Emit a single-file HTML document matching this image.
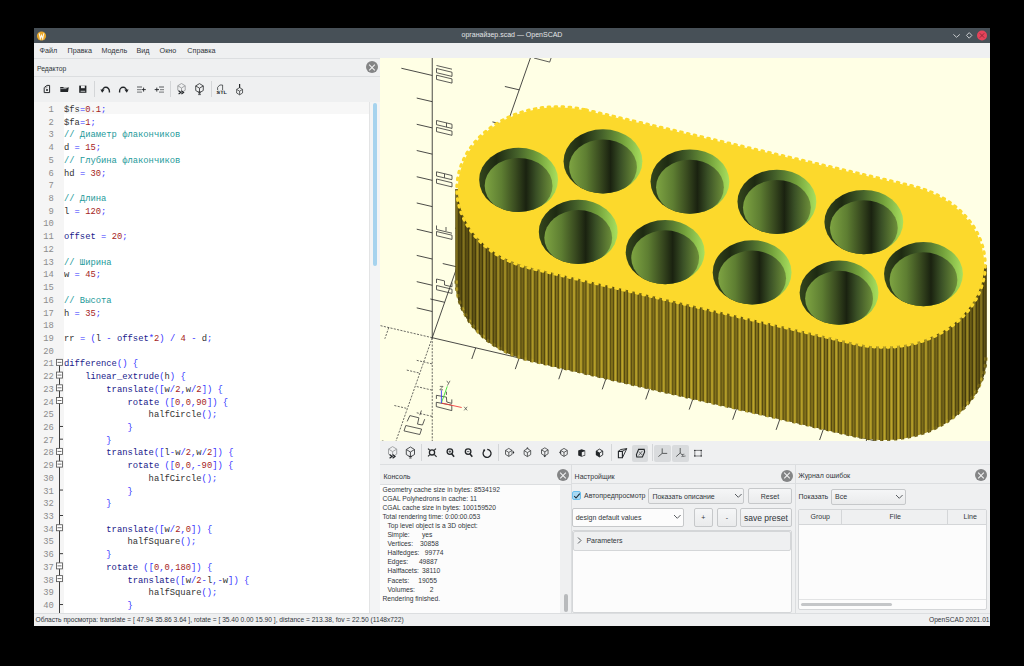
<!DOCTYPE html>
<html><head><meta charset="utf-8">
<style>
*{margin:0;padding:0;box-sizing:border-box}
html,body{width:1024px;height:666px;background:#000;overflow:hidden;font-family:"Liberation Sans",sans-serif;color:#31363b}
.a{position:absolute}
#win{position:absolute;left:34px;top:28px;width:956px;height:598px;background:#eff0f1;overflow:hidden}
#title{left:34px;top:28px;width:956px;height:14.5px;background:#475057}
#title .t{position:absolute;left:0;width:956px;top:2.5px;text-align:center;font-size:7px;color:#e3e5e7}
#menu{left:34px;top:42.5px;width:956px;height:16.5px;background:#eff0f1;border-bottom:1px solid #dcdee0}
#menu span{position:absolute;top:3.3px;font-size:7.2px;color:#31363b}
.hdr{background:#eff0f1;border-bottom:1px solid #dcdee0}
.hdr .t{position:absolute;left:3px;font-size:7px;color:#31363b}
.xbtn{position:absolute;width:12px;height:12px;border-radius:50%;background:#848586}
.xbtn:before,.xbtn:after{content:"";position:absolute;left:2px;top:5.55px;width:8px;height:0.9px;background:#f4f4f4;transform:rotate(45deg)}
.xbtn:after{transform:rotate(-45deg)}
#gutter{left:34px;top:101.5px;width:29.5px;height:511.5px;background:#f5f5f5}
#code{left:63.5px;top:101.5px;width:305px;height:511.5px;background:#fff}
#curline{left:63.5px;top:101.5px;width:305px;height:12.8px;background:#f7f7f7}
.ln{position:absolute;left:24px;width:29.8px;text-align:right;font-family:"Liberation Mono",monospace;font-size:9.4px;line-height:12.72px;height:12.72px;color:#8c8c8c;transform:scaleX(0.94);transform-origin:100% 0}
.cl{position:absolute;left:63.8px;white-space:pre;font-family:"Liberation Mono",monospace;font-size:9.4px;line-height:12.72px;height:12.72px;color:#333;transform:scaleX(0.94);transform-origin:0 0}
.c{color:#1d9a9a}.k{color:#20208a}.o{color:#3333ff}.n{color:#a51d1d}
.vp{position:absolute;left:380px;top:58px}
.tb{background:#eff0f1}
.sep{position:absolute;width:1px;background:#d4d6d8}
.ic{position:absolute}
#console{left:380px;top:484.8px;width:180px;height:128.2px;background:#fcfcfc}
.cons{position:absolute;left:382.5px;font-size:6.7px;color:#31363b;white-space:pre;line-height:9px}
.btn{position:absolute;background:linear-gradient(#f5f6f7,#eaebec);border:1px solid #c6c8ca;border-radius:2px;font-size:7px;text-align:center;color:#31363b}
.combo{position:absolute;background:linear-gradient(#f5f6f7,#eaebec);border:1px solid #c6c8ca;border-radius:2px;font-size:7px;color:#31363b}
.status{position:absolute;top:615.5px;font-size:6.65px;color:#31363b;white-space:pre}
</style></head><body>
<div id="win"></div>
<!-- title bar -->
<div id="title" class="a"><div class="t">органайзер.scad — OpenSCAD</div></div>
<svg class="a" style="left:36.3px;top:30.5px" width="12" height="12" viewBox="0 0 12 12">
 <circle cx="5.5" cy="5" r="4.6" fill="#e9a82a"/>
 <path d="M3.2,2.4 L4.3,7.6 L5.5,4.4 L6.7,7.6 L7.8,2.4" fill="none" stroke="#fff8e8" stroke-width="1.1"/>
</svg>
<svg class="a" style="left:950px;top:29px" width="40" height="13" viewBox="950 29 40 13">
 <path d="M953.4,34.4 L956.6,37.3 L959.8,34.4" fill="none" stroke="#c8cbce" stroke-width="1"/>
 <path d="M969.2,32.6 L971.9,35.4 L969.2,38.2 L966.5,35.4 Z" fill="none" stroke="#c8cbce" stroke-width="1"/>
 <circle cx="982" cy="35.5" r="5" fill="#e4435a"/>
 <path d="M979.8,33.3 L984.2,37.7 M984.2,33.3 L979.8,37.7" stroke="#8a2634" stroke-width="0.9"/>
</svg>
<!-- menu -->
<div id="menu" class="a">
 <span style="left:5.5px">Файл</span><span style="left:33.6px">Правка</span><span style="left:67.4px">Модель</span>
 <span style="left:102.5px">Вид</span><span style="left:125.6px">Окно</span><span style="left:153.3px">Справка</span>
</div>
<!-- editor dock -->
<div class="a hdr" style="left:34px;top:59px;width:346px;height:18px"><div class="t" style="top:5.5px;font-size:6.8px">Редактор</div></div>
<div class="xbtn" style="left:366px;top:61px"></div>
<div class="a tb" style="left:34px;top:77px;width:346px;height:24.5px"></div>
<div class="sep" style="left:93.5px;top:81px;height:16px"></div>
<div class="sep" style="left:170.4px;top:81px;height:16px"></div>
<div class="sep" style="left:210.7px;top:81px;height:16px"></div>
<svg class="a" style="left:0;top:0;pointer-events:none" width="1024" height="666" viewBox="0 0 1024 666"><path d="M44.2,92.6 L44.2,87.6 L47,85.4 L49.6,85.4 L49.6,92.6 Z" fill="none" stroke="#232629" stroke-width="1"/><path d="M44.2,87.8 L46.9,87.8 L46.9,85.4" fill="none" stroke="#888" stroke-width="0.8"/><circle cx="47" cy="90" r="1" fill="#232629"/><path d="M60.2,87 L63,87 L64,87.8 L67,87.8 L68.8,87.2 L68,92 L60.4,92 Z" fill="#232629"/><path d="M60.4,88.6 L66.5,88.6" stroke="#eff0f1" stroke-width="0.6"/><path d="M79.2,85.6 L86.4,85.6 L86.4,92.8 L79.2,92.8 Z" fill="#232629"/><rect x="81" y="85.6" width="3.8" height="2.6" fill="#eff0f1"/><rect x="80.6" y="90.8" width="4.6" height="0.8" fill="#eff0f1"/><path d="M102.4,91.2 A3.5,3.9 0 0 1 109.4,91.2 L109.4,92.4" fill="none" stroke="#232629" stroke-width="1.4"/><path d="M100.4,89.6 L104.6,89.6 L102.2,92.8 Z" fill="#232629"/><path d="M126.6,91.2 A3.5,3.9 0 0 0 119.6,91.2 L119.6,92.4" fill="none" stroke="#232629" stroke-width="1.4"/><path d="M128.6,89.6 L124.4,89.6 L126.8,92.8 Z" fill="#232629"/><path d="M137,87 L142,87 M137,89.6 L141,89.6 M137,92.2 L142,92.2" stroke="#8a8c8e" stroke-width="1.3"/><path d="M141.5,89.6 L145.8,89.6 M143.6,87.6 L143.6,91.6" stroke="#232629" stroke-width="0.9"/><path d="M159,87 L164,87 M160,89.6 L164,89.6 M159,92.2 L164,92.2" stroke="#8a8c8e" stroke-width="1.3"/><path d="M154.7,89.6 L159,89.6 M156.8,87.6 L156.8,91.6" stroke="#232629" stroke-width="0.9"/><path d="M181.50,83.50 L177.80,85.75 L177.80,90.25 L181.50,92.50 L185.20,90.25 L185.20,85.75 Z M177.80,85.75 L181.50,88.00 M185.20,85.75 L181.50,88.00 M181.50,88.00 L181.50,92.50" fill="none" stroke="#9a9c9e" stroke-width="0.90" stroke-linejoin="round"/><path d="M178.6,90.8 L180.8,92.4 L178.6,94 M181.4,90.8 L183.6,92.4 L181.4,94" fill="none" stroke="#232629" stroke-width="1.1"/><path d="M199.50,83.60 L195.72,85.90 L195.72,90.50 L199.50,92.80 L203.28,90.50 L203.28,85.90 Z M195.72,85.90 L199.50,88.20 M203.28,85.90 L199.50,88.20 M199.50,88.20 L199.50,92.80" fill="none" stroke="#3a3c3e" stroke-width="0.90" stroke-linejoin="round"/><path d="M198.2,92 L200.8,92 M198.6,93.4 L200.4,93.4 M198.2,94.6 L200.8,94.6" stroke="#232629" stroke-width="0.8"/><path d="M217.6,90 L217.6,87.4 L219.8,85 L222.6,85 L222.6,90" fill="none" stroke="#232629" stroke-width="0.7"/><text x="216.6" y="94.3" font-family="Liberation Sans, sans-serif" font-weight="bold" font-size="4.6" fill="#232629" style="text-rendering:geometricPrecision" textLength="10.4" lengthAdjust="spacingAndGlyphs">STL</text><path d="M239.6,84 L239.6,88" stroke="#232629" stroke-width="1.2"/><path d="M239.60,87.60 L236.64,89.40 L236.64,93.00 L239.60,94.80 L242.56,93.00 L242.56,89.40 Z M236.64,89.40 L239.60,91.20 M242.56,89.40 L239.60,91.20 M239.60,91.20 L239.60,94.80" fill="none" stroke="#3a3c3e" stroke-width="0.80" stroke-linejoin="round"/></svg>
<div id="gutter" class="a"></div>
<div id="code" class="a"></div>
<div id="curline" class="a"></div>
<div class="a" style="left:368.5px;top:101.5px;width:11.5px;height:511.5px;background:#f3f4f5;border-left:1px solid #e3e4e5"></div>
<div class="a" style="left:372.8px;top:103px;width:4px;height:163px;border-radius:2px;background:#a6d3ee"></div>
<div class="ln" style="top:104.00px">1</div>
<div class="cl" style="top:104.00px">$fs<span class="o">=</span><span class="n">0.1</span><span class="o">;</span></div>
<div class="ln" style="top:116.72px">2</div>
<div class="cl" style="top:116.72px">$fa<span class="o">=</span><span class="n">1</span><span class="o">;</span></div>
<div class="ln" style="top:129.44px">3</div>
<div class="cl" style="top:129.44px"><span class="c">// Диаметр флакончиков</span></div>
<div class="ln" style="top:142.16px">4</div>
<div class="cl" style="top:142.16px">d <span class="o">=</span> <span class="n">15</span><span class="o">;</span></div>
<div class="ln" style="top:154.88px">5</div>
<div class="cl" style="top:154.88px"><span class="c">// Глубина флакончиков</span></div>
<div class="ln" style="top:167.60px">6</div>
<div class="cl" style="top:167.60px">hd <span class="o">=</span> <span class="n">30</span><span class="o">;</span></div>
<div class="ln" style="top:180.32px">7</div>
<div class="ln" style="top:193.04px">8</div>
<div class="cl" style="top:193.04px"><span class="c">// Длина</span></div>
<div class="ln" style="top:205.76px">9</div>
<div class="cl" style="top:205.76px">l <span class="o">=</span> <span class="n">120</span><span class="o">;</span></div>
<div class="ln" style="top:218.48px">10</div>
<div class="ln" style="top:231.20px">11</div>
<div class="cl" style="top:231.20px"><span class="k">offset</span> <span class="o">=</span> <span class="n">20</span><span class="o">;</span></div>
<div class="ln" style="top:243.92px">12</div>
<div class="ln" style="top:256.64px">13</div>
<div class="cl" style="top:256.64px"><span class="c">// Ширина</span></div>
<div class="ln" style="top:269.36px">14</div>
<div class="cl" style="top:269.36px">w <span class="o">=</span> <span class="n">45</span><span class="o">;</span></div>
<div class="ln" style="top:282.08px">15</div>
<div class="ln" style="top:294.80px">16</div>
<div class="cl" style="top:294.80px"><span class="c">// Высота</span></div>
<div class="ln" style="top:307.52px">17</div>
<div class="cl" style="top:307.52px">h <span class="o">=</span> <span class="n">35</span><span class="o">;</span></div>
<div class="ln" style="top:320.24px">18</div>
<div class="ln" style="top:332.96px">19</div>
<div class="cl" style="top:332.96px">rr <span class="o">=</span> <span class="o">(</span>l <span class="o">-</span> <span class="k">offset</span><span class="o">*</span><span class="n">2</span><span class="o">)</span> <span class="o">/</span> <span class="n">4</span> <span class="o">-</span> d<span class="o">;</span></div>
<div class="ln" style="top:345.68px">20</div>
<div class="ln" style="top:358.40px">21</div>
<div class="cl" style="top:358.40px"><span class="k">difference</span><span class="o">(</span><span class="o">)</span> <span class="o">{</span></div>
<div class="ln" style="top:371.12px">22</div>
<div class="cl" style="top:371.12px">    <span class="k">linear_extrude</span><span class="o">(</span>h<span class="o">)</span> <span class="o">{</span></div>
<div class="ln" style="top:383.84px">23</div>
<div class="cl" style="top:383.84px">        <span class="k">translate</span><span class="o">(</span><span class="o">[</span>w<span class="o">/</span><span class="n">2</span><span class="o">,</span>w<span class="o">/</span><span class="n">2</span><span class="o">]</span><span class="o">)</span> <span class="o">{</span></div>
<div class="ln" style="top:396.56px">24</div>
<div class="cl" style="top:396.56px">            <span class="k">rotate</span> <span class="o">(</span><span class="o">[</span><span class="n">0</span><span class="o">,</span><span class="n">0</span><span class="o">,</span><span class="n">90</span><span class="o">]</span><span class="o">)</span> <span class="o">{</span></div>
<div class="ln" style="top:409.28px">25</div>
<div class="cl" style="top:409.28px">                halfCircle<span class="o">(</span><span class="o">)</span><span class="o">;</span></div>
<div class="ln" style="top:422.00px">26</div>
<div class="cl" style="top:422.00px">            <span class="o">}</span></div>
<div class="ln" style="top:434.72px">27</div>
<div class="cl" style="top:434.72px">        <span class="o">}</span></div>
<div class="ln" style="top:447.44px">28</div>
<div class="cl" style="top:447.44px">        <span class="k">translate</span><span class="o">(</span><span class="o">[</span>l<span class="o">-</span>w<span class="o">/</span><span class="n">2</span><span class="o">,</span>w<span class="o">/</span><span class="n">2</span><span class="o">]</span><span class="o">)</span> <span class="o">{</span></div>
<div class="ln" style="top:460.16px">29</div>
<div class="cl" style="top:460.16px">            <span class="k">rotate</span> <span class="o">(</span><span class="o">[</span><span class="n">0</span><span class="o">,</span><span class="n">0</span><span class="o">,</span><span class="o">-</span><span class="n">90</span><span class="o">]</span><span class="o">)</span> <span class="o">{</span></div>
<div class="ln" style="top:472.88px">30</div>
<div class="cl" style="top:472.88px">                halfCircle<span class="o">(</span><span class="o">)</span><span class="o">;</span></div>
<div class="ln" style="top:485.60px">31</div>
<div class="cl" style="top:485.60px">            <span class="o">}</span></div>
<div class="ln" style="top:498.32px">32</div>
<div class="cl" style="top:498.32px">        <span class="o">}</span></div>
<div class="ln" style="top:511.04px">33</div>
<div class="ln" style="top:523.76px">34</div>
<div class="cl" style="top:523.76px">        <span class="k">translate</span><span class="o">(</span><span class="o">[</span>w<span class="o">/</span><span class="n">2</span><span class="o">,</span><span class="n">0</span><span class="o">]</span><span class="o">)</span> <span class="o">{</span></div>
<div class="ln" style="top:536.48px">35</div>
<div class="cl" style="top:536.48px">            halfSquare<span class="o">(</span><span class="o">)</span><span class="o">;</span></div>
<div class="ln" style="top:549.20px">36</div>
<div class="cl" style="top:549.20px">        <span class="o">}</span></div>
<div class="ln" style="top:561.92px">37</div>
<div class="cl" style="top:561.92px">        <span class="k">rotate</span> <span class="o">(</span><span class="o">[</span><span class="n">0</span><span class="o">,</span><span class="n">0</span><span class="o">,</span><span class="n">180</span><span class="o">]</span><span class="o">)</span> <span class="o">{</span></div>
<div class="ln" style="top:574.64px">38</div>
<div class="cl" style="top:574.64px">            <span class="k">translate</span><span class="o">(</span><span class="o">[</span>w<span class="o">/</span><span class="n">2</span><span class="o">-</span>l<span class="o">,</span><span class="o">-</span>w<span class="o">]</span><span class="o">)</span> <span class="o">{</span></div>
<div class="ln" style="top:587.36px">39</div>
<div class="cl" style="top:587.36px">                halfSquare<span class="o">(</span><span class="o">)</span><span class="o">;</span></div>
<div class="ln" style="top:600.08px">40</div>
<div class="cl" style="top:600.08px">            <span class="o">}</span></div>
<svg class="a" style="left:0;top:0" width="1024" height="666" viewBox="0 0 1024 666"><line x1="59.5" y1="362.36" x2="59.5" y2="613" stroke="#3c3c3c" stroke-width="1"/>
<rect x="56.5" y="359.36" width="6" height="6" fill="#fff" stroke="#606060" stroke-width="0.9"/>
<line x1="57.5" y1="362.36" x2="61.5" y2="362.36" stroke="#606060" stroke-width="0.9"/>
<rect x="56.5" y="372.08" width="6" height="6" fill="#fff" stroke="#606060" stroke-width="0.9"/>
<line x1="57.5" y1="375.08" x2="61.5" y2="375.08" stroke="#606060" stroke-width="0.9"/>
<rect x="56.5" y="384.80" width="6" height="6" fill="#fff" stroke="#606060" stroke-width="0.9"/>
<line x1="57.5" y1="387.80" x2="61.5" y2="387.80" stroke="#606060" stroke-width="0.9"/>
<rect x="56.5" y="397.52" width="6" height="6" fill="#fff" stroke="#606060" stroke-width="0.9"/>
<line x1="57.5" y1="400.52" x2="61.5" y2="400.52" stroke="#606060" stroke-width="0.9"/>
<rect x="56.5" y="448.40" width="6" height="6" fill="#fff" stroke="#606060" stroke-width="0.9"/>
<line x1="57.5" y1="451.40" x2="61.5" y2="451.40" stroke="#606060" stroke-width="0.9"/>
<rect x="56.5" y="461.12" width="6" height="6" fill="#fff" stroke="#606060" stroke-width="0.9"/>
<line x1="57.5" y1="464.12" x2="61.5" y2="464.12" stroke="#606060" stroke-width="0.9"/>
<rect x="56.5" y="524.72" width="6" height="6" fill="#fff" stroke="#606060" stroke-width="0.9"/>
<line x1="57.5" y1="527.72" x2="61.5" y2="527.72" stroke="#606060" stroke-width="0.9"/>
<rect x="56.5" y="562.88" width="6" height="6" fill="#fff" stroke="#606060" stroke-width="0.9"/>
<line x1="57.5" y1="565.88" x2="61.5" y2="565.88" stroke="#606060" stroke-width="0.9"/>
<rect x="56.5" y="575.60" width="6" height="6" fill="#fff" stroke="#606060" stroke-width="0.9"/>
<line x1="57.5" y1="578.60" x2="61.5" y2="578.60" stroke="#606060" stroke-width="0.9"/>
<line x1="59.5" y1="426.46" x2="63" y2="426.46" stroke="#3c3c3c" stroke-width="1"/>
<line x1="59.5" y1="439.18" x2="63" y2="439.18" stroke="#3c3c3c" stroke-width="1"/>
<line x1="59.5" y1="490.06" x2="63" y2="490.06" stroke="#3c3c3c" stroke-width="1"/>
<line x1="59.5" y1="515.50" x2="63" y2="515.50" stroke="#3c3c3c" stroke-width="1"/>
<line x1="59.5" y1="553.66" x2="63" y2="553.66" stroke="#3c3c3c" stroke-width="1"/>
<line x1="59.5" y1="604.54" x2="63" y2="604.54" stroke="#3c3c3c" stroke-width="1"/></svg>
<!-- viewport -->
<svg class="vp" width="610" height="383" viewBox="380 58 610 383">
<defs>
<linearGradient id="gc" x1="0" y1="0" x2="1" y2="0">
 <stop offset="0" stop-color="#34461c"/><stop offset="0.22" stop-color="#1e2a12"/><stop offset="0.48" stop-color="#44602a"/>
 <stop offset="0.75" stop-color="#74a23c"/><stop offset="1" stop-color="#a8e05e"/>
</linearGradient>
<linearGradient id="gi" x1="0" y1="0" x2="1" y2="0">
 <stop offset="0" stop-color="#7ea442"/><stop offset="0.25" stop-color="#5e7e32"/><stop offset="0.45" stop-color="#3a4c20"/>
 <stop offset="0.61" stop-color="#1a2210"/><stop offset="0.76" stop-color="#3a5026"/><stop offset="1" stop-color="#6e903a"/>
</linearGradient>
<linearGradient id="shade" gradientUnits="userSpaceOnUse" x1="455" y1="0" x2="987" y2="0">
 <stop offset="0" stop-color="#000" stop-opacity="0.32"/><stop offset="0.1" stop-color="#000" stop-opacity="0.1"/>
 <stop offset="0.2" stop-color="#000" stop-opacity="0"/><stop offset="0.85" stop-color="#000" stop-opacity="0"/>
 <stop offset="0.94" stop-color="#000" stop-opacity="0.12"/><stop offset="1" stop-color="#000" stop-opacity="0.3"/>
</linearGradient>
<clipPath id="sideclip"><path d="M455.28,189.02 L455.28,280.51 A102.73,83.68 0 0 0 529.78,360.97 L855.82,436.89 A102.73,83.68 0 0 0 986.79,356.43 L986.79,264.94 L982.79,264.94 A98.73,79.87 0 0 1 856.75,341.69 L530.70,265.77 A98.73,79.87 0 0 1 459.28,189.02 Z"/></clipPath>
<pattern id="stripes" x="0" y="0" width="6.9" height="10" patternUnits="userSpaceOnUse">
 <rect x="0" y="0" width="6.9" height="10" fill="#54480f"/>
 <rect x="0.2" y="0" width="2.4" height="10" fill="#bca52a"/>
 <rect x="4.2" y="0" width="1.3" height="10" fill="#98841f"/>
</pattern>
<clipPath id="hc0"><ellipse cx="518.59" cy="179.84" rx="39.43" ry="32.12"/></clipPath>
<clipPath id="hc1"><ellipse cx="603.00" cy="161.31" rx="39.43" ry="32.12"/></clipPath>
<clipPath id="hc2"><ellipse cx="689.95" cy="181.55" rx="39.43" ry="32.12"/></clipPath>
<clipPath id="hc3"><ellipse cx="776.89" cy="201.80" rx="39.43" ry="32.12"/></clipPath>
<clipPath id="hc4"><ellipse cx="863.84" cy="222.04" rx="39.43" ry="32.12"/></clipPath>
<clipPath id="hc5"><ellipse cx="578.23" cy="231.91" rx="39.43" ry="32.12"/></clipPath>
<clipPath id="hc6"><ellipse cx="665.17" cy="252.15" rx="39.43" ry="32.12"/></clipPath>
<clipPath id="hc7"><ellipse cx="752.12" cy="272.40" rx="39.43" ry="32.12"/></clipPath>
<clipPath id="hc8"><ellipse cx="839.06" cy="292.64" rx="39.43" ry="32.12"/></clipPath>
<clipPath id="hc9"><ellipse cx="923.48" cy="274.11" rx="39.43" ry="32.12"/></clipPath>
</defs>
<rect x="380" y="58" width="610" height="383" fill="#ffffe5"/>
<line x1="432.24" y1="337.71" x2="432.24" y2="22.99" stroke="#2a2a2a" stroke-width="0.85"/>
<line x1="432.24" y1="337.71" x2="432.24" y2="495.07" stroke="#3a3a3a" stroke-width="0.75" stroke-dasharray="2.1,1.3"/>
<line x1="432.24" y1="337.71" x2="1127.80" y2="499.67" stroke="#2a2a2a" stroke-width="0.85"/>
<line x1="432.24" y1="337.71" x2="345.29" y2="317.47" stroke="#3a3a3a" stroke-width="0.75" stroke-dasharray="2.1,1.3"/>
<line x1="432.24" y1="337.71" x2="556.50" y2="-16.41" stroke="#2a2a2a" stroke-width="0.85"/>
<line x1="432.24" y1="337.71" x2="382.53" y2="479.36" stroke="#3a3a3a" stroke-width="0.75" stroke-dasharray="2.1,1.3"/>
<line x1="416.72" y1="307.87" x2="432.24" y2="311.49" stroke="#2a2a2a" stroke-width="0.85"/>
<line x1="416.72" y1="281.65" x2="432.24" y2="285.26" stroke="#2a2a2a" stroke-width="0.85"/>
<line x1="416.72" y1="255.42" x2="432.24" y2="259.03" stroke="#2a2a2a" stroke-width="0.85"/>
<line x1="416.72" y1="229.19" x2="432.24" y2="232.81" stroke="#2a2a2a" stroke-width="0.85"/>
<line x1="416.72" y1="202.97" x2="432.24" y2="206.58" stroke="#2a2a2a" stroke-width="0.85"/>
<line x1="416.72" y1="176.74" x2="432.24" y2="180.35" stroke="#2a2a2a" stroke-width="0.85"/>
<line x1="416.72" y1="150.51" x2="432.24" y2="154.13" stroke="#2a2a2a" stroke-width="0.85"/>
<line x1="416.72" y1="124.29" x2="432.24" y2="127.90" stroke="#2a2a2a" stroke-width="0.85"/>
<line x1="416.72" y1="98.06" x2="432.24" y2="101.67" stroke="#2a2a2a" stroke-width="0.85"/>
<line x1="401.37" y1="68.26" x2="432.24" y2="75.45" stroke="#2a2a2a" stroke-width="0.85"/>
<line x1="416.72" y1="360.33" x2="432.24" y2="363.94" stroke="#3a3a3a" stroke-width="0.75" stroke-dasharray="2.1,1.3"/>
<line x1="416.72" y1="386.55" x2="432.24" y2="390.17" stroke="#3a3a3a" stroke-width="0.75" stroke-dasharray="2.1,1.3"/>
<line x1="416.72" y1="412.78" x2="432.24" y2="416.39" stroke="#3a3a3a" stroke-width="0.75" stroke-dasharray="2.1,1.3"/>
<line x1="475.71" y1="347.84" x2="471.79" y2="358.99" stroke="#2a2a2a" stroke-width="0.85"/>
<line x1="519.18" y1="357.96" x2="515.27" y2="369.11" stroke="#2a2a2a" stroke-width="0.85"/>
<line x1="562.65" y1="368.08" x2="558.74" y2="379.24" stroke="#2a2a2a" stroke-width="0.85"/>
<line x1="606.13" y1="378.20" x2="602.21" y2="389.36" stroke="#2a2a2a" stroke-width="0.85"/>
<line x1="649.60" y1="388.33" x2="645.69" y2="399.48" stroke="#2a2a2a" stroke-width="0.85"/>
<line x1="693.07" y1="398.45" x2="689.16" y2="409.60" stroke="#2a2a2a" stroke-width="0.85"/>
<line x1="736.55" y1="408.57" x2="732.63" y2="419.72" stroke="#2a2a2a" stroke-width="0.85"/>
<line x1="780.02" y1="418.69" x2="776.10" y2="429.85" stroke="#2a2a2a" stroke-width="0.85"/>
<line x1="823.49" y1="428.81" x2="819.58" y2="439.97" stroke="#2a2a2a" stroke-width="0.85"/>
<line x1="866.96" y1="438.94" x2="863.05" y2="450.09" stroke="#2a2a2a" stroke-width="0.85"/>
<line x1="910.44" y1="449.06" x2="906.52" y2="460.21" stroke="#2a2a2a" stroke-width="0.85"/>
<line x1="953.91" y1="459.18" x2="950.00" y2="470.34" stroke="#2a2a2a" stroke-width="0.85"/>
<line x1="997.38" y1="469.30" x2="993.47" y2="480.46" stroke="#2a2a2a" stroke-width="0.85"/>
<line x1="1040.86" y1="479.43" x2="1036.94" y2="490.58" stroke="#2a2a2a" stroke-width="0.85"/>
<line x1="388.76" y1="327.59" x2="384.85" y2="338.75" stroke="#3a3a3a" stroke-width="0.75" stroke-dasharray="2.1,1.3"/>
<line x1="430.32" y1="298.96" x2="444.66" y2="302.30" stroke="#2a2a2a" stroke-width="0.85"/>
<line x1="442.74" y1="263.55" x2="457.09" y2="266.89" stroke="#2a2a2a" stroke-width="0.85"/>
<line x1="455.17" y1="228.14" x2="469.52" y2="231.48" stroke="#2a2a2a" stroke-width="0.85"/>
<line x1="467.60" y1="192.73" x2="481.94" y2="196.07" stroke="#2a2a2a" stroke-width="0.85"/>
<line x1="480.02" y1="157.31" x2="494.37" y2="160.65" stroke="#2a2a2a" stroke-width="0.85"/>
<line x1="492.45" y1="121.90" x2="506.79" y2="125.24" stroke="#2a2a2a" stroke-width="0.85"/>
<line x1="504.87" y1="86.49" x2="519.22" y2="89.83" stroke="#2a2a2a" stroke-width="0.85"/>
<line x1="517.30" y1="51.08" x2="531.65" y2="54.42" stroke="#2a2a2a" stroke-width="0.85"/>
<line x1="406.77" y1="370.09" x2="419.81" y2="373.13" stroke="#3a3a3a" stroke-width="0.75" stroke-dasharray="2.1,1.3"/>
<line x1="394.34" y1="405.50" x2="407.38" y2="408.54" stroke="#3a3a3a" stroke-width="0.75" stroke-dasharray="2.1,1.3"/>
<line x1="381.91" y1="440.91" x2="394.96" y2="443.95" stroke="#3a3a3a" stroke-width="0.75" stroke-dasharray="2.1,1.3"/>
<line x1="436.5" y1="65.5" x2="452" y2="69.2" stroke="#333" stroke-width="0.8"/>
<path d="M436.50,68.50 L452.00,72.22 L452.00,76.42 L436.50,72.70 Z" fill="none" stroke="#333" stroke-width="0.8" stroke-linejoin="miter"/>
<path d="M436.50,75.20 L452.00,78.92 L452.00,83.12 L436.50,79.40 Z" fill="none" stroke="#333" stroke-width="0.8" stroke-linejoin="miter"/>
<path d="M436.50,120.50 L452.00,124.22 L452.00,128.42 L436.50,124.70 Z" fill="none" stroke="#333" stroke-width="0.8" stroke-linejoin="miter"/>
<line x1="446.5" y1="122.9" x2="446.5" y2="127.1" stroke="#333" stroke-width="0.8"/>
<path d="M436.50,127.40 L452.00,131.12 L452.00,135.32 L436.50,131.60 Z" fill="none" stroke="#333" stroke-width="0.8" stroke-linejoin="miter"/>
<path d="M452.00,179.40 L452.00,175.50 L436.50,171.80 L436.50,176.00 L452.00,179.70" fill="none" stroke="#333" stroke-width="0.8" stroke-linejoin="miter"/>
<path d="M436.50,179.00 L452.00,182.72 L452.00,186.92 L436.50,183.20 Z" fill="none" stroke="#333" stroke-width="0.8" stroke-linejoin="miter"/>
<path d="M444.50,173.80 L444.50,177.80" fill="none" stroke="#333" stroke-width="0.8" stroke-linejoin="miter"/>
<path d="M436.50,225.50 L436.50,229.50 L452.00,233.20" fill="none" stroke="#333" stroke-width="0.8" stroke-linejoin="miter"/>
<path d="M446.00,227.00 L446.00,231.00" fill="none" stroke="#333" stroke-width="0.8" stroke-linejoin="miter"/>
<path d="M436.50,231.50 L452.00,235.22 L452.00,239.42 L436.50,235.70 Z" fill="none" stroke="#333" stroke-width="0.8" stroke-linejoin="miter"/>
<path d="M436.50,283.00 L436.50,279.00 L444.50,280.90 L444.50,285.00 L452.00,286.80 L452.00,282.60" fill="none" stroke="#333" stroke-width="0.8" stroke-linejoin="miter"/>
<path d="M436.50,285.50 L452.00,289.22 L452.00,293.42 L436.50,289.70 Z" fill="none" stroke="#333" stroke-width="0.8" stroke-linejoin="miter"/>
<path d="M436.30,402.30 L451.80,405.20 L451.80,410.60 L436.30,406.60 Z" fill="none" stroke="#333" stroke-width="0.8" stroke-linejoin="miter"/>
<path d="M436.40,398.90 L436.40,395.30 L446.40,397.10 L446.80,402.00 L451.80,403.40 L451.80,399.40" fill="none" stroke="#333" stroke-width="0.8" stroke-linejoin="miter"/>
<path d="M446.40,391.70 L446.40,394.90" fill="none" stroke="#333" stroke-width="0.8" stroke-linejoin="miter"/>
<path d="M404.00,430.90 L405.80,425.50 L421.60,429.10 L419.80,434.50 Z" fill="none" stroke="#333" stroke-width="0.8" stroke-linejoin="miter"/>
<path d="M407.20,421.40 L409.90,415.60 L418.90,417.80 L417.50,424.10 L422.50,425.00 L424.70,419.20" fill="none" stroke="#333" stroke-width="0.8" stroke-linejoin="miter"/>
<path d="M421.40,410.50 L419.80,415.20" fill="none" stroke="#333" stroke-width="0.8" stroke-linejoin="miter"/>
<path d="M534.00,58.00 L549.70,62.10 L551.10,58.00" fill="none" stroke="#333" stroke-width="0.8" stroke-linejoin="miter"/>
<path d="M455.28,189.02 L455.28,280.51 A102.73,83.68 0 0 0 529.78,360.97 L855.82,436.89 A102.73,83.68 0 0 0 986.79,356.43 L986.79,264.94 L982.79,264.94 A98.73,79.87 0 0 1 856.75,341.69 L530.70,265.77 A98.73,79.87 0 0 1 459.28,189.02 Z" fill="url(#stripes)"/>
<rect x="450" y="180" width="540" height="270" fill="url(#shade)" clip-path="url(#sideclip)"/>
<path d="M456.28,280.51 A101.73,82.87 0 0 0 530.05,360.19 L856.10,436.11 A101.73,82.87 0 0 0 985.79,356.43" fill="none" stroke="url(#stripes)" stroke-width="3.4" stroke-dasharray="3.3 3.6"/>
<path d="M585.56,110.52 L911.60,186.43 A100.23,81.65 0 0 1 984.29,264.94 A100.23,81.65 0 0 1 856.51,343.44 L530.46,267.52 A100.23,81.65 0 0 1 457.78,189.02 A100.23,81.65 0 0 1 585.56,110.52 Z" fill="#fcd92c"/>
<path d="M585.86,109.83 L911.91,185.75 A101.23,82.37 0 0 1 985.29,264.94 A101.23,82.37 0 0 1 856.20,344.12 L530.16,268.21 A101.23,82.37 0 0 1 456.78,189.02 A101.23,82.37 0 0 1 585.86,109.83 Z" fill="none" stroke="#fcd92c" stroke-width="3.0" stroke-dasharray="1.7 5.25" stroke-linecap="round"/>
<ellipse cx="518.59" cy="179.84" rx="39.43" ry="32.12" fill="url(#gc)"/>
<ellipse cx="518.59" cy="185.64" rx="33.91" ry="27.62" fill="url(#gi)" clip-path="url(#hc0)"/>
<ellipse cx="603.00" cy="161.31" rx="39.43" ry="32.12" fill="url(#gc)"/>
<ellipse cx="603.00" cy="167.11" rx="33.91" ry="27.62" fill="url(#gi)" clip-path="url(#hc1)"/>
<ellipse cx="689.95" cy="181.55" rx="39.43" ry="32.12" fill="url(#gc)"/>
<ellipse cx="689.95" cy="187.35" rx="33.91" ry="27.62" fill="url(#gi)" clip-path="url(#hc2)"/>
<ellipse cx="776.89" cy="201.80" rx="39.43" ry="32.12" fill="url(#gc)"/>
<ellipse cx="776.89" cy="207.60" rx="33.91" ry="27.62" fill="url(#gi)" clip-path="url(#hc3)"/>
<ellipse cx="863.84" cy="222.04" rx="39.43" ry="32.12" fill="url(#gc)"/>
<ellipse cx="863.84" cy="227.84" rx="33.91" ry="27.62" fill="url(#gi)" clip-path="url(#hc4)"/>
<ellipse cx="578.23" cy="231.91" rx="39.43" ry="32.12" fill="url(#gc)"/>
<ellipse cx="578.23" cy="237.71" rx="33.91" ry="27.62" fill="url(#gi)" clip-path="url(#hc5)"/>
<ellipse cx="665.17" cy="252.15" rx="39.43" ry="32.12" fill="url(#gc)"/>
<ellipse cx="665.17" cy="257.95" rx="33.91" ry="27.62" fill="url(#gi)" clip-path="url(#hc6)"/>
<ellipse cx="752.12" cy="272.40" rx="39.43" ry="32.12" fill="url(#gc)"/>
<ellipse cx="752.12" cy="278.20" rx="33.91" ry="27.62" fill="url(#gi)" clip-path="url(#hc7)"/>
<ellipse cx="839.06" cy="292.64" rx="39.43" ry="32.12" fill="url(#gc)"/>
<ellipse cx="839.06" cy="298.44" rx="33.91" ry="27.62" fill="url(#gi)" clip-path="url(#hc8)"/>
<ellipse cx="923.48" cy="274.11" rx="39.43" ry="32.12" fill="url(#gc)"/>
<ellipse cx="923.48" cy="279.91" rx="33.91" ry="27.62" fill="url(#gi)" clip-path="url(#hc9)"/>
<g>
<line x1="441.4" y1="403" x2="461.7" y2="407.5" stroke="#f03c3c" stroke-width="0.9"/>
<line x1="441.4" y1="403" x2="447.3" y2="386.3" stroke="#3ce03c" stroke-width="0.9"/>
<line x1="441.4" y1="403" x2="441.4" y2="390.4" stroke="#3c3cf0" stroke-width="0.9"/>
<path d="M464.2,406.8 L467.2,410.4 M467.2,406.8 L464.2,410.4" stroke="#444" stroke-width="0.7"/>
<path d="M446.8,380.8 L448.4,383.2 M450,380.8 L447.4,385.6" stroke="#444" stroke-width="0.7" fill="none"/>
<path d="M439.8,386.4 L443,386.4 L439.8,389.8 L443,389.8" stroke="#444" stroke-width="0.7" fill="none"/>
</g>
</svg>
<!-- viewport toolbar -->
<div class="a tb" style="left:380px;top:441px;width:610px;height:24.3px;border-bottom:1px solid #dcdee0"></div>
<div class="sep" style="left:421.4px;top:444px;height:17px"></div>
<div class="sep" style="left:498.4px;top:444px;height:17px"></div>
<div class="sep" style="left:610.5px;top:444px;height:17px"></div>
<div class="sep" style="left:651.5px;top:444px;height:17px"></div>
<div class="a" style="left:631.5px;top:445px;width:16.5px;height:16.5px;border-radius:2px;background:#d9dbdd"></div>
<div class="a" style="left:654px;top:445px;width:16.5px;height:16.5px;border-radius:2px;background:#d9dbdd"></div>
<div class="a" style="left:672px;top:445px;width:16.5px;height:16.5px;border-radius:2px;background:#d9dbdd"></div>
<svg class="a" style="left:0;top:0;pointer-events:none" width="1024" height="666" viewBox="0 0 1024 666"><path d="M392.60,446.60 L388.49,449.10 L388.49,454.10 L392.60,456.60 L396.71,454.10 L396.71,449.10 Z M388.49,449.10 L392.60,451.60 M396.71,449.10 L392.60,451.60 M392.60,451.60 L392.60,456.60" fill="none" stroke="#9a9c9e" stroke-width="0.90" stroke-linejoin="round"/><path d="M389.6,454.6 L392,456.4 L389.6,458.2 M392.6,454.6 L395,456.4 L392.6,458.2" fill="none" stroke="#232629" stroke-width="1.2"/><path d="M410.40,447.00 L406.29,449.50 L406.29,454.50 L410.40,457.00 L414.51,454.50 L414.51,449.50 Z M406.29,449.50 L410.40,452.00 M414.51,449.50 L410.40,452.00 M410.40,452.00 L410.40,457.00" fill="none" stroke="#3a3c3e" stroke-width="0.90" stroke-linejoin="round"/><path d="M408.8,456.4 L412,456.4 M409.2,458 L411.6,458" stroke="#232629" stroke-width="0.8"/><circle cx="432" cy="452.4" r="2.6" fill="none" stroke="#232629" stroke-width="1.3"/><path d="M428,448.6 L429.6,450 M436,448.6 L434.4,450 M428,456.4 L429.6,454.8 M436.6,456.8 L434.4,454.6" stroke="#232629" stroke-width="1.1"/><circle cx="449.9" cy="451.6" r="2.8" fill="none" stroke="#232629" stroke-width="1.3"/><path d="M451.7,453.8 L454.1,456.8" stroke="#232629" stroke-width="1.5"/><circle cx="468.1" cy="451.6" r="2.8" fill="none" stroke="#232629" stroke-width="1.3"/><path d="M469.9,453.8 L472.3,456.8" stroke="#232629" stroke-width="1.5"/><path d="M448.6,451.6 L451.2,451.6 M449.9,450.3 L449.9,452.9" stroke="#232629" stroke-width="0.7"/><path d="M466.8,451.6 L469.4,451.6" stroke="#232629" stroke-width="0.7"/><path d="M484.2,450.6 A4,4 0 1 0 487.2,449.4" fill="none" stroke="#232629" stroke-width="1.3"/><circle cx="484.2" cy="450.2" r="1" fill="#232629"/><path d="M508.80,448.40 L505.51,450.40 L505.51,454.40 L508.80,456.40 L512.09,454.40 L512.09,450.40 Z M505.51,450.40 L508.80,452.40 M512.09,450.40 L508.80,452.40 M508.80,452.40 L508.80,456.40" fill="none" stroke="#3a3c3e" stroke-width="0.80" stroke-linejoin="round"/><path d="M513,450.8 L514.4,452.4 L513,454 Z" fill="#232629"/><path d="M527.40,448.60 L524.11,450.60 L524.11,454.60 L527.40,456.60 L530.69,454.60 L530.69,450.60 Z M524.11,450.60 L527.40,452.60 M530.69,450.60 L527.40,452.60 M527.40,452.60 L527.40,456.60" fill="none" stroke="#3a3c3e" stroke-width="0.80" stroke-linejoin="round"/><path d="M526,448.4 L527.4,447.2 L528.8,448.4 Z" fill="#232629"/><path d="M544.80,447.80 L541.51,449.80 L541.51,453.80 L544.80,455.80 L548.09,453.80 L548.09,449.80 Z M541.51,449.80 L544.80,451.80 M548.09,449.80 L544.80,451.80 M544.80,451.80 L544.80,455.80" fill="none" stroke="#3a3c3e" stroke-width="0.80" stroke-linejoin="round"/><path d="M543.4,455.8 L544.8,457.2 L546.2,455.8 Z" fill="#232629"/><path d="M564.00,448.40 L560.71,450.40 L560.71,454.40 L564.00,456.40 L567.29,454.40 L567.29,450.40 Z M560.71,450.40 L564.00,452.40 M567.29,450.40 L564.00,452.40 M564.00,452.40 L564.00,456.40" fill="none" stroke="#3a3c3e" stroke-width="0.80" stroke-linejoin="round"/><path d="M560.6,450.8 L559.2,452.4 L560.6,454 Z" fill="#232629"/><path d="M578.2,450.6 L581.6,449.2 L585.2,450.6 L585.2,455.4 L581.6,456.8 L578.2,455.4 Z" fill="#232629"/><path d="M581.8,452.2 L584.6,451.2 L584.6,455 L581.8,456 Z" fill="#eff0f1"/><path d="M599.50,449.10 L596.29,451.05 L596.29,454.95 L599.50,456.90 L602.71,454.95 L602.71,451.05 Z M596.29,451.05 L599.50,453.00 M602.71,451.05 L599.50,453.00 M599.50,453.00 L599.50,456.90" fill="none" stroke="#232629" stroke-width="0.90" stroke-linejoin="round"/><path d="M596,451 L599.5,452.8 L599.5,456.8 L596,455 Z" fill="#232629"/><path d="M618.4,451.4 L622.4,451.4 L622.4,457.8 L618.4,457.8 Z" fill="none" stroke="#232629" stroke-width="1.1"/><path d="M618.4,451.4 L620.4,449.6 L626.8,448.6 L622.4,451.4 M622.4,457.8 L626.8,448.6" fill="none" stroke="#232629" stroke-width="0.9"/><path d="M636.4,454.6 L638.6,449.4 L644.2,449.4 L644.6,452 L642.4,457 L636.8,457 Z" fill="none" stroke="#232629" stroke-width="1.1"/><path d="M638.6,455.4 L642.4,451 M638.8,451.6 L642.4,455.2" stroke="#232629" stroke-width="0.6"/><path d="M662.2,448.4 L662.2,453.4 L667.2,453.4 M662.2,453.4 L658.4,456.6" fill="none" stroke="#3a3c3e" stroke-width="0.8"/><path d="M680.2,448 L680.2,453 M680.2,453 L676.2,456.6 M680.2,453 L683.4,456" fill="none" stroke="#3a3c3e" stroke-width="0.8"/><path d="M682,454.6 L684.4,454.2 M681.4,456.6 L685.6,456" stroke="#3a3c3e" stroke-width="0.6"/><path d="M694.8,450.4 L701.2,450.4 L701.2,456 L694.8,456 Z" fill="none" stroke="#4a4c4e" stroke-width="0.7"/><circle cx="694.8" cy="450.4" r="0.7" fill="#232629"/><circle cx="701.2" cy="450.4" r="0.7" fill="#232629"/><circle cx="701.2" cy="456.0" r="0.7" fill="#232629"/><circle cx="694.8" cy="456.0" r="0.7" fill="#232629"/></svg>
<!-- console -->
<div class="a hdr" style="left:380px;top:465.3px;width:191px;height:19.5px"><div class="t" style="top:7.8px;left:3.5px">Консоль</div></div>
<div class="xbtn" style="left:557px;top:469px"></div>
<div id="console" class="a"></div>
<div class="a" style="left:560px;top:484.8px;width:11px;height:128.2px;background:#eff0f1"></div>
<div class="a" style="left:564px;top:593.5px;width:3.5px;height:18px;border-radius:2px;background:#b8babc"></div>
<div class="cons" style="top:485.00px">Geometry cache size in bytes: 8534192</div>
<div class="cons" style="top:494.05px">CGAL Polyhedrons in cache: 11</div>
<div class="cons" style="top:503.10px">CGAL cache size in bytes: 100159520</div>
<div class="cons" style="top:512.15px">Total rendering time: 0:00:00.053</div>
<div class="cons" style="top:521.20px;left:387.4px">Top level object is a 3D object:</div>
<div class="cons" style="top:530.25px;left:387.4px">Simple:</div><div class="cons" style="top:530.25px;left:422.0px">yes</div>
<div class="cons" style="top:539.30px;left:387.4px">Vertices:</div><div class="cons" style="top:539.30px;left:420.0px">30858</div>
<div class="cons" style="top:548.35px;left:387.4px">Halfedges:</div><div class="cons" style="top:548.35px;left:424.8px">99774</div>
<div class="cons" style="top:557.40px;left:387.4px">Edges:</div><div class="cons" style="top:557.40px;left:418.9px">49887</div>
<div class="cons" style="top:566.45px;left:387.4px">Halffacets:</div><div class="cons" style="top:566.45px;left:422.0px">38110</div>
<div class="cons" style="top:575.50px;left:387.4px">Facets:</div><div class="cons" style="top:575.50px;left:418.3px">19055</div>
<div class="cons" style="top:584.55px;left:387.4px">Volumes:</div><div class="cons" style="top:584.55px;left:429.8px">2</div>
<div class="cons" style="top:593.60px">Rendering finished.</div>
<!-- customizer -->
<div class="a" style="left:571px;top:465.3px;width:1px;height:148px;background:#dcdee0"></div>
<div class="a hdr" style="left:572px;top:465.3px;width:223px;height:19px"><div class="t" style="top:7.4px;left:2.6px">Настройщик</div></div>
<div class="xbtn" style="left:780.5px;top:469.5px"></div>
<div class="a" style="left:572px;top:491px;width:9px;height:9px;border-radius:2px;background:#a9d9f3;border:1px solid #6cc0ee"></div>
<svg class="a" style="left:572px;top:491px" width="10" height="10"><path d="M2.2,5 L4,7 L7.8,2.6" fill="none" stroke="#1d2a35" stroke-width="1.1"/></svg>
<div class="a" style="left:584px;top:492px;font-size:7px;white-space:pre">Автопредпросмотр</div>
<div class="combo" style="left:648.4px;top:488.4px;width:96px;height:16px"><span class="a" style="left:3px;top:4px;white-space:pre">Показать описание</span></div>
<svg class="a" style="left:734px;top:493px" width="10" height="6"><path d="M1,1 L4.3,4.3 L7.6,1" fill="none" stroke="#31363b" stroke-width="0.8"/></svg>
<div class="btn" style="left:748.3px;top:488.4px;width:43.3px;height:16px;padding-top:4px">Reset</div>
<div class="combo" style="left:571.7px;top:507.6px;width:112.7px;height:19.7px;background:#fcfcfc"><span class="a" style="left:3px;top:5.5px;white-space:pre">design default values</span></div>
<svg class="a" style="left:673px;top:514px" width="10" height="6"><path d="M1,1 L4.3,4.3 L7.6,1" fill="none" stroke="#31363b" stroke-width="0.8"/></svg>
<div class="btn" style="left:693.5px;top:507.6px;width:19.7px;height:19.7px;padding-top:5px">+</div>
<div class="btn" style="left:716.9px;top:507.6px;width:19.9px;height:19.7px;padding-top:5px">-</div>
<div class="btn" style="left:740.4px;top:507.6px;width:51.2px;height:19.7px;padding-top:4.5px;font-size:8.5px">save preset</div>
<div class="a" style="left:571.7px;top:529.7px;width:220.8px;height:83.6px;background:#fcfcfc;border:1px solid #d4d6d8;border-radius:2px"></div>
<div class="a" style="left:573.4px;top:530.9px;width:217.5px;height:19.7px;background:#eff0f1;border:1px solid #d4d6d8;border-radius:2px"></div>
<svg class="a" style="left:576px;top:536px" width="8" height="10"><path d="M2,1.5 L5,4.5 L2,7.5" fill="none" stroke="#31363b" stroke-width="0.8"/></svg>
<div class="a" style="left:586.4px;top:537.2px;font-size:7px">Parameters</div>
<!-- error log -->
<div class="a" style="left:795px;top:465.3px;width:1px;height:148px;background:#dcdee0"></div>
<div class="a hdr" style="left:796px;top:465.3px;width:194px;height:19px"><div class="t" style="top:7.2px;left:2.3px">Журнал ошибок</div></div>
<div class="xbtn" style="left:975px;top:469.3px"></div>
<div class="a" style="left:798.5px;top:493px;font-size:7px">Показать</div>
<div class="combo" style="left:831px;top:489.4px;width:74.5px;height:15.3px"><span class="a" style="left:3px;top:3px">Все</span></div>
<svg class="a" style="left:895px;top:494px" width="10" height="6"><path d="M1,1 L4.3,4.3 L7.6,1" fill="none" stroke="#31363b" stroke-width="0.8"/></svg>
<div class="a" style="left:798.3px;top:508.5px;width:188.4px;height:101.7px;background:#fcfcfc;border:1px solid #d4d6d8;border-radius:2px"></div>
<div class="a" style="left:799.3px;top:509.5px;width:186.4px;height:15px;background:#eff0f1;border-bottom:1px solid #d4d6d8"></div>
<div class="a" style="left:841.2px;top:509.5px;width:1px;height:15px;background:#d4d6d8"></div>
<div class="a" style="left:947.4px;top:509.5px;width:1px;height:15px;background:#d4d6d8"></div>
<div class="a" style="left:810.5px;top:513.3px;font-size:7px">Group</div>
<div class="a" style="left:889.6px;top:513.3px;font-size:7px">File</div>
<div class="a" style="left:963.6px;top:513.3px;font-size:7px">Line</div>
<div class="a" style="left:799.3px;top:598.5px;width:186.4px;height:1px;background:#e2e3e4"></div>
<div class="a" style="left:800.8px;top:602.8px;width:91.5px;height:3px;border-radius:1.5px;background:#c4c6c8"></div>
<!-- status -->
<div class="a" style="left:34px;top:613px;width:956px;height:13px;background:#eff0f1;border-top:1px solid #dcdee0"></div>
<div class="status" style="left:35.5px">Область просмотра: translate = [ 47.94 35.86 3.64 ], rotate = [ 35.40 0.00 15.90 ], distance = 213.38, fov = 22.50 (1148x722)</div>
<div class="status" style="left:929px">OpenSCAD 2021.01</div>
</body></html>
